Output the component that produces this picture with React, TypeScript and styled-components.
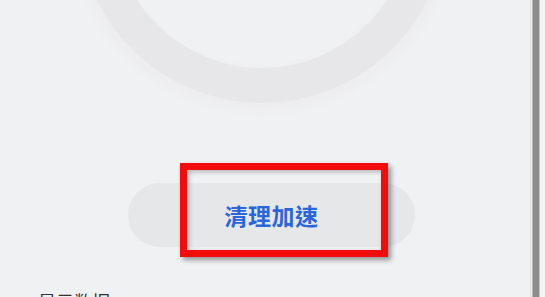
import * as React from 'react';
import styled, { createGlobalStyle } from 'styled-components';

const GlobalStyle = createGlobalStyle`
  html, body {
    margin: 0;
    padding: 0;
    background: #f0f1f3;
    font-family: "Noto Sans CJK TC", "Noto Sans CJK SC", sans-serif;
    overflow: hidden;
  }
`;

const Page = styled.div`
  display: flex;
  width: 545px;
  height: 297px;
  background: #f0f1f3;
  overflow: hidden;
`;

const Main = styled.div`
  flex: 1;
  display: flex;
  flex-direction: column;
`;

const RingArea = styled.div`
  height: 120px;
  flex-shrink: 0;
`;

const ButtonRow = styled.div`
  display: flex;
  padding-left: 128px;
  margin-top: 63px;
`;

const Pill = styled.div`
  position: relative;
  width: 287px;
  height: 64px;
  border-radius: 32px;
  background: #e6e7e9;
  display: flex;
  align-items: center;
  justify-content: center;
`;

const PillLabel = styled.span`
  color: #2a66db;
  font-size: 23px;
  font-weight: 700;
  letter-spacing: 0.5px;
  line-height: 1;
`;

const Highlight = styled.div`
  position: absolute;
  left: 52px;
  top: -20px;
  width: 208px;
  height: 94px;
  box-sizing: border-box;
  border: 7px solid #f20c0c;
  box-shadow: 3px 3px 5px rgba(0, 0, 0, 0.4), inset 2px 2px 5px rgba(0, 0, 0, 0.25);
  pointer-events: none;
`;

const Caption = styled.div`
  margin-top: 45px;
  padding-left: 38px;
  color: #333;
  font-size: 18px;
  line-height: 1;
`;

const ScrollTrack = styled.div`
  width: 15px;
  flex-shrink: 0;
  display: flex;
  background: #f3f4f5;
  border-left: 1px solid #dcdcdc;
`;

const ScrollThumb = styled.div`
  width: 6px;
  margin-left: 1px;
  background: #8d8d8d;
  border-left: 1px solid #b4b4b4;
  border-right: 1px solid #c4c4c4;
`;

const Ring: React.FC = () => (
  <svg width="530" height="120" viewBox="0 0 530 120">
    <defs>
      <filter id="halo" x="-20%" y="-20%" width="140%" height="140%">
        <feGaussianBlur stdDeviation="6" />
      </filter>
    </defs>
    <circle cx="262" cy="-81" r="172" fill="none" stroke="#ededef" strokeWidth="40" filter="url(#halo)" />
    <circle cx="262" cy="-81" r="166.5" fill="none" stroke="#e7e7e9" strokeWidth="35" />
  </svg>
);

export default function App() {
  return (
    <>
      <GlobalStyle />
      <Page>
        <Main>
          <RingArea>
            <Ring />
          </RingArea>
          <ButtonRow>
            <Pill>
              <PillLabel>清理加速</PillLabel>
              <Highlight />
            </Pill>
          </ButtonRow>
          <Caption>显示数据</Caption>
        </Main>
        <ScrollTrack>
          <ScrollThumb />
        </ScrollTrack>
      </Page>
    </>
  );
}
